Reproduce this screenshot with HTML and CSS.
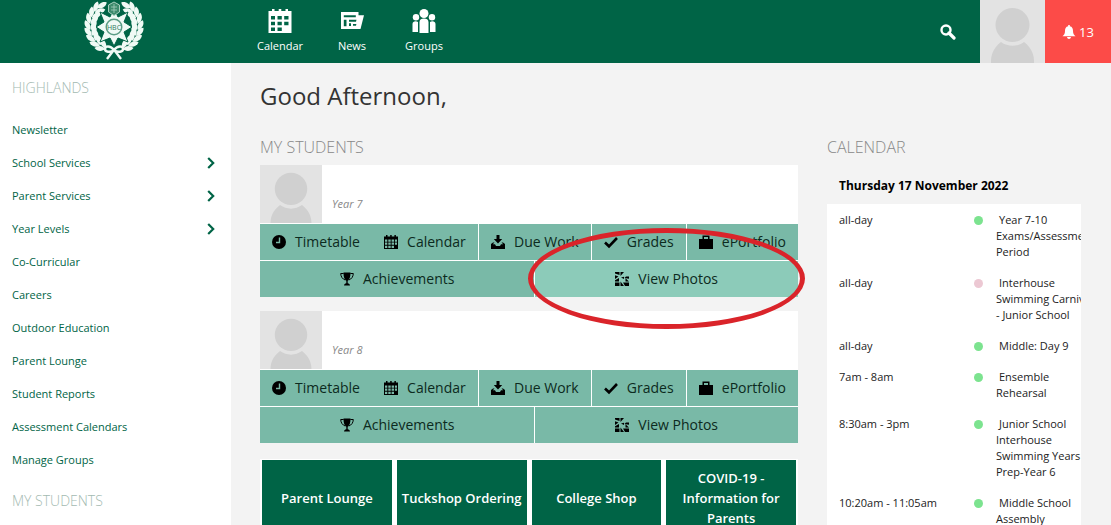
FILE: index.html
```html
<!DOCTYPE html>
<html lang="en">
<head>
  <meta charset="UTF-8" />
  <meta name="viewport" content="width=device-width, initial-scale=1.0" />
  <title>Highlands</title>
  <link rel="stylesheet" href="styles.css">
</head>
<body>
  <!-- Shared icons -->
  <svg class="sprite" aria-hidden="true">
    <symbol id="avatar" viewBox="0 0 65 63" preserveAspectRatio="xMidYMin slice">
      <rect width="65" height="75" fill="#e3e3e3"/>
      <path d="M11 75V61c0-10 6-16 10-19 7 5 16 5 23 0 4 3 10 9 10 19v14z" fill="#d0d0d0"/>
      <circle cx="32.500" cy="25" r="17" fill="#d0d0d0"/>
    </symbol>
    <symbol id="chevron" viewBox="0 0 8 12">
      <path d="M1.200 1 6.200 6 1.200 11" fill="none" stroke="#006446" stroke-width="2.200"/>
    </symbol>
    <symbol id="clock" viewBox="0 0 14 14">
      <circle cx="7" cy="7" r="7"/>
      <path d="M7.500 2.500v5H4" fill="none" stroke="#79b9a7" stroke-width="1.400"/>
    </symbol>
    <symbol id="cal" viewBox="0 0 14 14">
      <path d="M0 1.500h2V0h1.500v1.500h2.700V0h1.500v1.500h2.700V0h1.500v1.500H14V14H0zM1 4.500v2.200h2.300V4.500zm3.300 0v2.200h2.400V4.500zm3.300 0v2.200H10V4.500zm3.300 0v2.200H13V4.500zM1 7.600v2.200h2.300V7.600zm3.300 0v2.200h2.400V7.600zm3.300 0v2.200H10V7.600zM1 10.700v2.400h2.300v-2.400zm3.300 0v2.400h2.400v-2.400zm3.300 0v2.400H10v-2.400zM10.900 7.600v2.200H13V7.600z" fill-rule="evenodd"/>
    </symbol>
    <symbol id="download" viewBox="0 0 14 14">
      <path d="M5.500 0h3v4h2.700L7 8.500 2.800 4h2.700zM0 9l2-1.500h1.500L1.800 9.300H4l1 1.700h4l1-1.700h2.200l-1.700-1.800H12L14 9v5H0z"/>
    </symbol>
    <symbol id="check" viewBox="0 0 14 14">
      <path d="M1 7.500 5 11.300 13 3" fill="none" stroke="#000" stroke-width="2.600"/>
    </symbol>
    <symbol id="bag" viewBox="0 0 14 14">
      <path d="M3.500 4V.500h7V4H14v10H0V4zM5 4h4V2H5z" fill-rule="evenodd"/>
    </symbol>
    <symbol id="trophy" viewBox="0 0 14 14">
      <path d="M3.500.500h7c0 4.500-.8 7-2.800 8.200v2.600c1.300.2 2 .9 2.300 2.200H4c.3-1.300 1-2 2.300-2.200V8.700C4.300 7.500 3.500 5 3.500.500z"/>
      <path d="M3.700 1.500H.7c.1 3.300 1.800 5.500 4.500 6.500M10.300 1.500h3c-.1 3.300-1.800 5.500-4.500 6.500" fill="none" stroke="#000"/>
    </symbol>
    <symbol id="photos" viewBox="0 0 14 14">
      <path d="M0 0h4.500v3L0 1.500zM0 3.200l3.500 1.300L0 7zM5.500 0H9L5.500 4zM0 8.200 4 6v3.500H0zM0 10.500h4.500V14H0zM5.500 9.500 9 14H5.500zM14 14h-4l-2-3.500h6zM14 9.500h-3.500V6.200zM14 4.500v2.200L9.500 6 11 4.500zM6 5.500l3-.8V7z"/>
    </symbol>
  </svg>

  <header class="topbar">
    <a href="#" class="logo" aria-label="Home">
      <svg width="60" height="62" viewBox="0 0 60 62" fill="#f0faf5">
        <defs>
          <path id="leaf" d="M0-5.500C3.400-2.500 3.200 2.500 0 5.500-3.200 2.500-3.400-2.500 0-5.500z"/>
          <g id="pair">
            <use href="#leaf" transform="translate(-26.500 0) rotate(-28)"/>
            <use href="#leaf" transform="translate(-20.500 0) rotate(28)"/>
          </g>
          <g id="branch">
            <use href="#pair" transform="rotate(-58)"/>
            <use href="#pair" transform="rotate(-43)"/>
            <use href="#pair" transform="rotate(-28)"/>
            <use href="#pair" transform="rotate(-13)"/>
            <use href="#pair" transform="rotate(2)"/>
            <use href="#pair" transform="rotate(17)"/>
            <use href="#pair" transform="rotate(32)"/>
            <use href="#pair" transform="rotate(47)"/>
            <use href="#leaf" transform="rotate(60) translate(-24 0)"/>
          </g>
        </defs>
        <use href="#branch" transform="translate(30 26)"/>
        <use href="#branch" transform="translate(30 26) scale(-1 1)"/>
        <path d="m30 8 4 9 10-5-4 10 8 5-8 5 4 10-10-4-4 8-4-8-10 4 4-10-8-5 8-5-4-10 10 5z" stroke="#006446"/>
        <circle cx="30" cy="27" r="8.500" fill="#5b9c84"/>
        <circle cx="30" cy="27" r="7" fill="#f0faf5"/>
        <text x="30" y="30" class="logo-text">HBC</text>
        <path d="m30 2 5.500 3v7L30 15.500 24.500 12V5z" fill="#3d8a6c" stroke="#a8d0c0"/>
        <path d="M27 7h6M27 10h6M30 4v9" stroke="#a8d0c0" stroke-width=".8"/>
        <path d="M30 50c-4-5-9-4-9-1s5 4 9 1zm0 0c4-5 9-4 9-1s-5 4-9 1zm-1 1-6 8m8-8 6 8" fill="none" stroke="#f0faf5" stroke-width="2.400"/>
      </svg>
    </a>
    <nav class="topnav">
      <a href="#">
        <svg width="24" height="24" viewBox="0 0 24 24"><path d="M.500 2H4V0h2.500v2h4.200V0h2.600v2h4.200V0H20v2h3.500v22H.500zM3 7v3.500h4V7zm6.500 0v3.500h4.300V7zm6.700 0v3.500h4.300V7zM3 12.800v3.400h4v-3.400zm6.500 0v3.400h4.300v-3.400zm6.700 0v3.400h4.300v-3.400zM3 18.500V22h4v-3.500zm6.500 0V22h4.300v-3.500z" fill="#fff" fill-rule="evenodd"/></svg>
        Calendar
      </a>
      <a href="#">
        <svg width="24" height="24" viewBox="0 0 24 24"><path d="M1 3h17.500v3.200H24L20.500 20H1zm2.800 3.300v2h12v-2zm0 4.500v6.500h2.700v-6.500zM9 10.700v2.100h7l.5-2.100zm0 3.600v2.800h2v-2.800zm4 .8v1.700h3l.4-1.700z" fill="#fff" fill-rule="evenodd"/></svg>
        News
      </a>
      <a href="#">
        <svg width="24" height="24" viewBox="0 0 24 24" fill="#fff"><circle cx="12" cy="4.500" r="4.500"/><circle cx="4" cy="8.300" r="3.200"/><circle cx="20" cy="8.300" r="3.200"/><path d="M7.500 24V13c0-2.500 2-3.500 4.500-3.500s4.500 1 4.500 3.500v11zM.500 23v-8c0-2 1.500-2.800 3-2.800 1 0 1.800.2 2.500.8v10zM18 23V13c.7-.6 1.500-.8 2.500-.8 1.500 0 3 .8 3 2.800v8z"/></svg>
        Groups
      </a>
    </nav>
    <div class="tools">
      <button type="button" class="search" aria-label="Search">
        <svg width="16" height="16" viewBox="0 0 16 16"><circle cx="6" cy="6" r="4.500" fill="none" stroke="#fff" stroke-width="2.400"/><path d="m9 9 5 5" stroke="#fff" stroke-width="3.200" stroke-linecap="round"/></svg>
      </button>
      <a href="#" class="profile" aria-label="Profile"><svg><use href="#avatar"/></svg></a>
      <a href="#" class="alerts">
        <svg width="14" height="14" viewBox="0 0 14 14" fill="#fff"><path d="M6.200 0h1.600v1.200C10.300 1.700 11 3.500 11 6c0 2.800 1 4 2.500 5.300H.500C2 10 3 8.800 3 6c0-2.500.7-4.300 3.200-4.800zM5 12h4c-.2 1.300-1 2-2 2s-1.800-.7-2-2z"/></svg>
        13
      </a>
    </div>
  </header>

  <div class="page">
    <aside class="sidebar">
      <h2>HIGHLANDS</h2>
      <ul>
        <li><a href="#">Newsletter</a></li>
        <li><a href="#">School Services <svg width="8" height="12"><use href="#chevron"/></svg></a></li>
        <li><a href="#">Parent Services <svg width="8" height="12"><use href="#chevron"/></svg></a></li>
        <li><a href="#">Year Levels <svg width="8" height="12"><use href="#chevron"/></svg></a></li>
        <li><a href="#">Co-Curricular</a></li>
        <li><a href="#">Careers</a></li>
        <li><a href="#">Outdoor Education</a></li>
        <li><a href="#">Parent Lounge</a></li>
        <li><a href="#">Student Reports</a></li>
        <li><a href="#">Assessment Calendars</a></li>
        <li><a href="#">Manage Groups</a></li>
      </ul>
      <h2>MY STUDENTS</h2>
    </aside>

    <main>
      <h1>Good Afternoon,</h1>
      <div class="columns">
        <section class="students">
          <h2>MY STUDENTS</h2>

          <article class="student">
            <div class="student-head">
              <svg class="photo"><use href="#avatar"/></svg>
              <p>Year 7</p>
            </div>
            <div class="links">
              <a href="#" class="joined"><svg><use href="#clock"/></svg>Timetable</a>
              <a href="#"><svg><use href="#cal"/></svg>Calendar</a>
              <a href="#"><svg><use href="#download"/></svg>Due Work</a>
              <a href="#"><svg><use href="#check"/></svg>Grades</a>
              <a href="#"><svg><use href="#bag"/></svg>ePortfolio</a>
            </div>
            <div class="links">
              <a href="#"><svg><use href="#trophy"/></svg>Achievements</a>
              <a href="#" class="active"><svg><use href="#photos"/></svg>View Photos
                <span class="ring"></span>
              </a>
            </div>
          </article>

          <article class="student">
            <div class="student-head">
              <svg class="photo"><use href="#avatar"/></svg>
              <p>Year 8</p>
            </div>
            <div class="links">
              <a href="#" class="joined"><svg><use href="#clock"/></svg>Timetable</a>
              <a href="#"><svg><use href="#cal"/></svg>Calendar</a>
              <a href="#"><svg><use href="#download"/></svg>Due Work</a>
              <a href="#"><svg><use href="#check"/></svg>Grades</a>
              <a href="#"><svg><use href="#bag"/></svg>ePortfolio</a>
            </div>
            <div class="links">
              <a href="#"><svg><use href="#trophy"/></svg>Achievements</a>
              <a href="#"><svg><use href="#photos"/></svg>View Photos</a>
            </div>
          </article>

          <div class="tiles">
            <a href="#">Parent Lounge</a>
            <a href="#">Tuckshop Ordering</a>
            <a href="#">College Shop</a>
            <a href="#">COVID-19 - Information for Parents</a>
          </div>
        </section>

        <section class="calendar">
          <h2>CALENDAR</h2>
          <h3>Thursday 17 November 2022</h3>
          <div class="events">
            <table>
              <tr><td class="time">all-day</td><td class="mark"><span class="dot"></span></td><td class="event">Year 7-10 Exams/Assessment Period</td></tr>
              <tr><td class="time">all-day</td><td class="mark"><span class="dot pink"></span></td><td class="event">Interhouse Swimming Carnival - Junior School</td></tr>
              <tr><td class="time">all-day</td><td class="mark"><span class="dot"></span></td><td class="event">Middle: Day 9</td></tr>
              <tr><td class="time">7am - 8am</td><td class="mark"><span class="dot"></span></td><td class="event">Ensemble Rehearsal</td></tr>
              <tr><td class="time">8:30am - 3pm</td><td class="mark"><span class="dot"></span></td><td class="event">Junior School Interhouse Swimming Years Prep-Year 6</td></tr>
              <tr><td class="time">10:20am - 11:05am</td><td class="mark"><span class="dot"></span></td><td class="event">Middle School Assembly</td></tr>
            </table>
          </div>
        </section>
      </div>
    </main>
  </div>
</body>
</html>
```
FILE: styles.css
```css
* {
  margin: 0;
  padding: 0;
  box-sizing: border-box;
}

body {
  display: flex;
  flex-direction: column;
  height: 100vh;
  overflow: hidden;
  font-family: 'Segoe UI', 'Open Sans', sans-serif;
  font-size: 11px;
  line-height: 16px;
  color: #222;
  background: #f3f3f3;
}

a {
  color: inherit;
  text-decoration: none;
}

ul {
  list-style: none;
}

h2 {
  font-size: 16px;
  font-weight: 300;
  line-height: 20px;
  color: #888;
}

.sprite {
  display: none;
}

/* Top bar */
.topbar {
  display: flex;
  flex: none;
  height: 63px;
  background: #006446;
  color: #fff;
}

.logo {
  width: 228px;
  text-align: center;
}

.logo-text {
  font-size: 7px;
  text-anchor: middle;
  fill: #2e7d5f;
}

.topnav {
  display: flex;
  margin-left: 16px;
}

.topnav a {
  display: flex;
  flex-direction: column;
  align-items: center;
  gap: 5px;
  width: 72px;
  padding-top: 9px;
  font-weight: 500;
}

.tools {
  display: flex;
  margin-left: auto;
}

.search {
  width: 64px;
  border: 0;
  background: none;
  cursor: pointer;
}

.search svg {
  display: block;
  margin: 0 auto;
}

.profile {
  width: 65px;
}

.profile svg {
  display: block;
  width: 100%;
  height: 100%;
}

.alerts {
  display: flex;
  align-items: center;
  justify-content: center;
  gap: 3px;
  width: 66px;
  background: #fc4b48;
  font-size: 13px;
}

.page {
  display: flex;
  flex: 1;
  min-height: 0;
}

/* Sidebar */
.sidebar {
  flex: none;
  width: 231px;
  padding: 15px 12px;
  background: #fff;
}

.sidebar h2 {
  font-size: 14px;
  color: #a3bab1;
}

.sidebar ul {
  padding: 15px 0;
}

.sidebar li a {
  display: flex;
  align-items: center;
  justify-content: space-between;
  height: 33px;
  padding-right: 4px;
  color: #006446;
}

/* Main */
main {
  flex: 1;
  min-width: 0;
  padding: 16px 30px 0 29px;
}

h1 {
  font-size: 24px;
  font-weight: 400;
  line-height: 34px;
  color: #333;
}

.columns {
  display: flex;
  gap: 29px;
  padding-top: 24px;
}

.students {
  flex: 1;
  min-width: 0;
}

.student {
  margin: 8px 0 14px;
}

.student + .student {
  margin-bottom: 16px;
}

.student-head {
  display: flex;
  height: 59px;
  background: #fff;
}

.student-head p {
  padding: 31px 10px 0;
  font-style: italic;
  color: #888;
}

.photo {
  width: 62px;
  height: 58px;
}

.links {
  display: flex;
  gap: 1px;
  padding-bottom: 1px;
  background: #fff;
}

.links:last-child {
  padding-bottom: 0;
}

.links a {
  position: relative;
  display: flex;
  flex: 1 1 auto;
  align-items: center;
  justify-content: center;
  gap: 9px;
  height: 36px;
  background: #79b9a7;
  font-size: 14px;
  color: #0c2a20;
}

.links a.joined {
  margin-right: -1px;
}

.links a.active {
  background: #8ccbb9;
}

.links svg {
  width: 14px;
  height: 14px;
  fill: #000;
}

.ring {
  position: absolute;
  top: -33px;
  right: -7px;
  bottom: -32px;
  left: -7px;
  z-index: 1;
  border: 5px solid #da242a;
  border-radius: 50%;
  pointer-events: none;
}

.tiles {
  display: grid;
  grid-template-columns: repeat(4, 1fr);
  gap: 5px;
  padding: 1px 2px;
  background: #fff;
}

.tiles a {
  display: flex;
  align-items: center;
  justify-content: center;
  min-height: 75px;
  background: #006446;
  font-size: 13px;
  font-weight: 600;
  line-height: 20px;
  text-align: center;
  color: #fff;
}

/* Calendar */
.calendar {
  flex: none;
  width: 254px;
}

.calendar h3 {
  padding: 18px 12px 7px;
  font-size: 12px;
  font-weight: 700;
  line-height: 22px;
  color: #000;
}

.events {
  overflow: hidden;
  background: #fff;
}

.events table {
  width: 269px;
  table-layout: fixed;
  border-collapse: collapse;
}

.events td {
  padding: 8px 0 7px;
  vertical-align: top;
}

.events .time {
  width: 147px;
  padding-left: 12px;
}

.events .mark {
  width: 22px;
}

.events .event {
  text-indent: 3px;
}

.dot {
  display: block;
  width: 9px;
  height: 9px;
  margin-top: 4px;
  border-radius: 50%;
  background: #7ce38f;
}

.dot.pink {
  background: #ecc8d3;
}
```
